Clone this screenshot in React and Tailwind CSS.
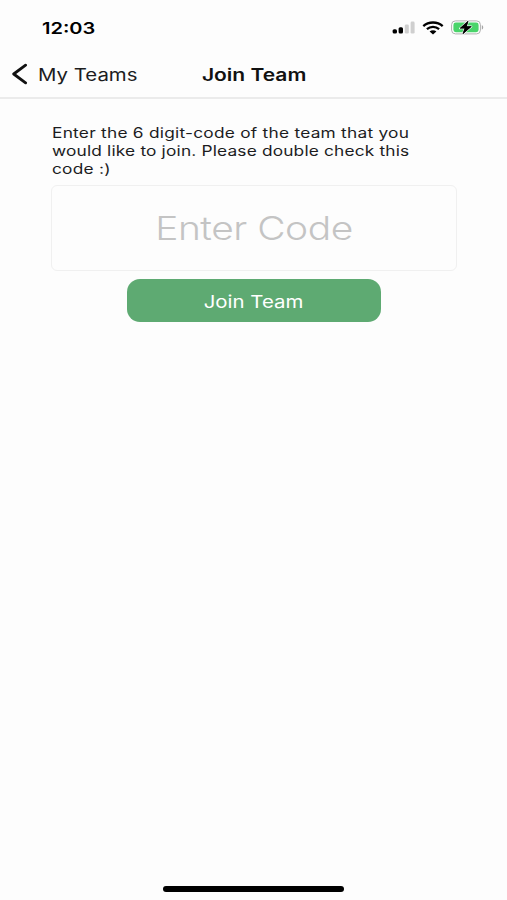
import { useState } from "react";

const SignalIcon = () => (
    <svg width="23" height="13" viewBox="0 0 23 13">
        <rect x="0.6" y="8.2" width="4.4" height="4.3" rx="1.6" fill="#000" />
        <rect x="6.6" y="6.3" width="4.4" height="6.2" rx="1.5" fill="#000" />
        <rect x="12.8" y="3.5" width="4" height="9" rx="1.3" fill="#cfcfcf" />
        <rect x="18.6" y="0.6" width="4" height="11.9" rx="1.3" fill="#cfcfcf" />
    </svg>
);

const WifiIcon = () => (
    <svg width="22" height="14" viewBox="0 0 22 14" fill="none" stroke="#000" strokeWidth="2.3">
        <path d="M1.3 5.1C6.6 0.3 15.4 0.3 20.7 5.1" />
        <path d="M4.9 8.2C8.4 5.2 13.6 5.2 17.1 8.2" />
        <path d="M7.6 10.4C9.5 8.7 12.5 8.7 14.4 10.4L11 13.4Z" fill="#000" stroke="none" />
    </svg>
);

const BatteryIcon = () => (
    <svg width="33" height="15" viewBox="0 0 33 15">
        <rect x="0.6" y="0.9" width="28.8" height="13" rx="3.8" fill="#fff" stroke="#b0b0b0" strokeWidth="1" />
        <rect x="2.4" y="2.6" width="25.2" height="9.6" rx="2.4" fill="#4ad46a" />
        <path d="M30.8 5.3C32.7 5.8 32.7 9 30.8 9.5Z" fill="#a6a6a6" />
        <path d="M17.2 0.9L9 8.3H13.8L11.8 13.9L20.4 6.5H15.5Z" fill="#000" stroke="#fff" strokeWidth="1.8" strokeLinejoin="round" paintOrder="stroke" />
        <path d="M17.2 0.9L9 8.3H13.8L11.8 13.9L20.4 6.5H15.5Z" fill="#000" stroke="#000" strokeWidth="0.5" strokeLinejoin="round" />
    </svg>
);

const StatusBar = () => (
    <div className="flex h-[50px] items-start justify-between pl-[42px] pr-[23px]">
        <span className="mt-[18px] origin-left scale-x-[1.25] text-[16px] font-semibold leading-5 text-black">12:03</span>
        <div className="mt-[20px] flex items-center gap-[7px]">
            <SignalIcon />
            <WifiIcon />
            <BatteryIcon />
        </div>
    </div>
);

const NavBar = () => (
    <div className="grid h-[49px] grid-cols-3 items-center border-b-2 border-[#ebebeb]">
        <button type="button" className="flex items-center pl-3 pt-px">
            <svg width="16" height="22" viewBox="0 0 16 22" fill="none" stroke="#111" strokeWidth="2.8" strokeLinecap="round" strokeLinejoin="round">
                <path d="M13.6 2.2L1.7 11L13.6 19.8" />
            </svg>
            <span className="ml-[10px] mt-px origin-left scale-x-[1.2] whitespace-nowrap text-[17px] leading-6 text-[#1c1c1e]">My Teams</span>
        </button>
        <h1 className="scale-x-[1.235] pl-px pt-[2px] text-center text-[17px] font-semibold leading-6 text-[#111]">Join Team</h1>
    </div>
);

export default function App() {
    const [code, setCode] = useState("");

    return (
        <div className="flex h-[900px] w-full flex-col overflow-hidden bg-[#fdfdfd] font-['Inter','Liberation_Sans',sans-serif]">
            <StatusBar />
            <NavBar />
            <main className="flex flex-1 flex-col px-[51px] pt-[25px]">
                <p className="ml-px origin-left scale-x-[1.235] whitespace-nowrap text-[14px] leading-[18px] tracking-[0.2px] text-[#1c1c1e]">
                    Enter the 6 digit-code of the team that you<br />
                    <span className="tracking-[0.14px]">would like to join. Please double check this</span><br />
                    code :)
                </p>
                <div className="mt-[7px] h-[86px] w-[406px] rounded-md border-[1.5px] border-[#f0f0f0]">
                    <input
                        type="text"
                        value={code}
                        maxLength={6}
                        placeholder="Enter Code"
                        onChange={(e) => setCode(e.target.value)}
                        className="h-full w-full scale-x-[1.18] bg-transparent text-center text-[33px] font-[350] tracking-[-0.4px] text-[#1c1c1e] placeholder:text-[#c4c4c4] focus:outline-none"
                    />
                </div>
                <button type="button" className="mx-auto mt-[8px] h-[43px] w-[254px] rounded-[13px] bg-[#5eaa72] text-white">
                    <span className="inline-block scale-x-[1.2] pt-[2px] text-[17px] leading-6">Join Team</span>
                </button>
            </main>
            <div className="mx-auto mb-[8px] h-[6px] w-[181px] rounded-full bg-black" />
        </div>
    );
}
